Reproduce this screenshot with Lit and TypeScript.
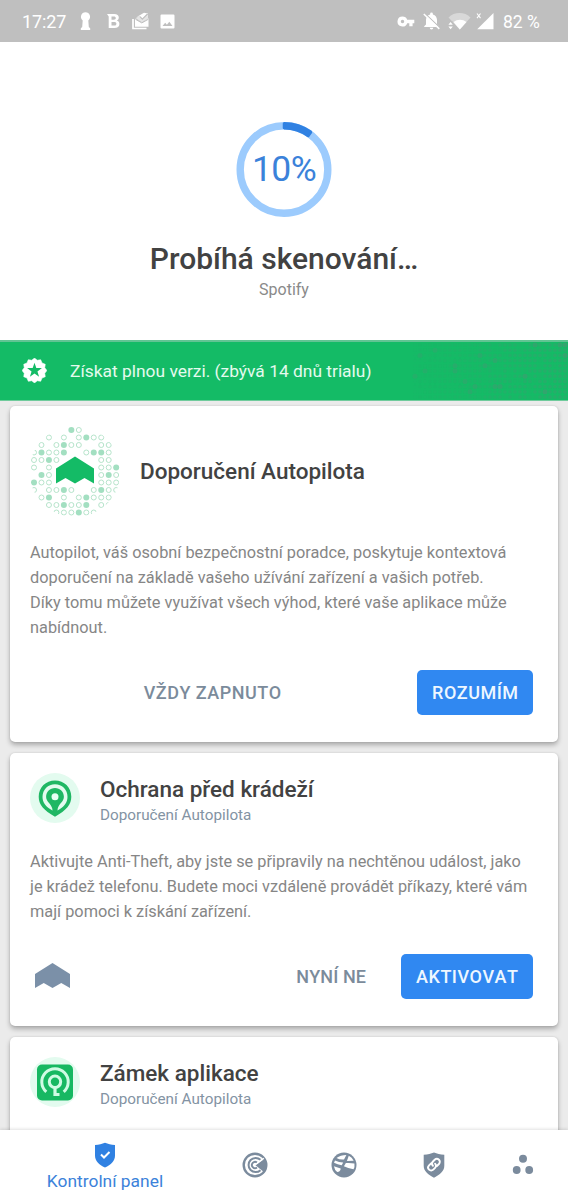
import { LitElement, html, svg, css } from "lit";
import { customElement } from "lit/decorators.js";

const MOUNTAIN = "M0 12 L19 0 L38 12 V27 L28.5 21.5 L19 27 L9.5 21.5 L0 27Z";

/* Halo of dots around the Autopilot mark: "o" ring, "F" filled, "." empty */
const HALO = [
  ".....Fo.....",
  "..o.o.oFoo..",
  ".o.oFoo..oo.",
  "oFooF..oFFo.",
  "ooFo.....oo.",
  "o.o......ooF",
  ".Fo......oFo",
  "Foo......ooo",
  "o.ooFo..oFoo",
  ".oF.o.oFooo.",
  "..ooFooF.oo.",
  "...oooFoo...",
];

const halo = HALO.flatMap((row, y) =>
  [...row].map((c, x) =>
    c === "."
      ? svg``
      : svg`<circle cx=${4 + x * 7.47} cy=${4 + y * 7.5} r=${c === "F" ? 3 : 2.5}
          fill=${c === "F" ? "#a3dfc1" : "none"} stroke=${c === "F" ? "none" : "#b5e3ca"} stroke-width="1"/>`
  )
);

/* Fading texture at the right end of the promo banner */
const texture = Array.from({ length: 11 * 31 }, (_, i) => {
  const x = i % 31;
  const y = Math.floor(i / 31);
  const h = Math.abs(Math.sin(x * 12.99 + y * 78.23) * 43758.5) % 1;
  const big = h > 0.93;
  const o = 0.06 + (x / 31) * 0.32 * (h > 0.25 ? 1 : 0.3) + (big ? 0.22 : 0);
  return svg`<circle cx=${3 + x * 5} cy=${3 + y * 5.2} r=${big ? 2.5 : 1.9} fill="#4a9474" opacity=${o.toFixed(2)}/>`;
});

const burst = Array.from({ length: 24 }, (_, i) => {
  const a = (i * Math.PI) / 12;
  const r = i % 2 ? 10.6 : 12.4;
  return `${(12.5 + r * Math.sin(a)).toFixed(2)},${(12.5 - r * Math.cos(a)).toFixed(2)}`;
}).join(" ");
const star = Array.from({ length: 10 }, (_, i) => {
  const a = (i * Math.PI) / 5;
  const r = i % 2 ? 3.1 : 7.8;
  return `${(12.5 + r * Math.sin(a)).toFixed(2)},${(12.5 - r * Math.cos(a)).toFixed(2)}`;
}).join(" ");

@customElement("status-bar")
export class StatusBar extends LitElement {
  static styles = css`
    :host { display: flex; align-items: center; height: 42px; background: #bfbfbf; color: #fff;
      font-size: 18px; box-sizing: border-box; padding: 0 28px 0 22px; }
    .group { display: flex; align-items: center; }
    .time { width: 57px; line-height: 20px; letter-spacing: -0.1px; padding-top: 1px; }
    .right { margin-left: auto; }
    svg { display: block; flex: none; }
    .i2 { margin-left: 16px; }
    .i3 { margin-left: 12px; }
    .i4 { margin-left: 11px; }
    .r2 { margin-left: 8px; }
    .r3 { margin-left: 8px; }
    .r4 { margin-left: 5px; }
    .pct { margin-left: 9px; line-height: 20px; width: 37px; padding-top: 1px; white-space: nowrap; font-size: 17.500px; }
  `;
  render() {
    return html`
      <div class="group">
        <span class="time">17:27</span>
        <svg width="12" height="20" viewBox="0 0 12 20"><path fill="#fff" d="M6.500 1.200a4.600 4.600 0 0 1 2.800 8.200L9.800 16l1.400 1.200V19H1.800v-1.800L3.200 16l.5-6.600a4.600 4.600 0 0 1 2.800-8.200z"/></svg>
        <svg class="i2" width="13" height="16" viewBox="0 0 13 16"><path fill="#fff" fill-rule="evenodd" d="M0 1h7.200c3 0 4.600 1.400 4.600 3.600 0 1.500-.8 2.500-2 3 1.700.5 2.600 1.600 2.600 3.300 0 2.500-1.800 4.100-5 4.100H1.700V3.500zM4.500 3.400v3.300h2.200c1.400 0 2.100-.6 2.100-1.700S8.100 3.400 6.700 3.400zm0 5.500v3.700h2.600c1.500 0 2.300-.7 2.300-1.900s-.8-1.800-2.300-1.800z"/></svg>
        <svg class="i3" width="17" height="18" viewBox="0 0 17 18"><path fill="none" stroke="#fff" stroke-width="1.700" d="M1 7v9.500h13.500"/><path fill="#fff" d="M3 6.800 7.200 3.800 10 7.600l6-6.200L12 .8 6 4.300 3 6.800v8h13.500V6.300l-6.300 4.500z"/><path d="M7 3.800 10 7l6-4.600v4.200l-6 3.700-6-3.700z" fill="#fff" opacity=".6"/><path d="m8 4.700 2.300 2.400 5-5" fill="none" stroke="#bfbfbf" stroke-width="1.200"/><path d="m3.500 7.300 6.300 3.600 6.500-3.600" fill="none" stroke="#bfbfbf"/></svg>
        <svg class="i4" width="15" height="15" viewBox="0 0 15 15"><path fill="#fff" fill-rule="evenodd" d="M1.600.5h11.800q1.100 0 1.100 1.100v11.800q0 1.100-1.100 1.100H1.600q-1.100 0-1.100-1.100V1.600Q.5.500 1.600.5zM2.500 12h10L9.300 7.700l-2.400 3.100L5.200 8.700z"/></svg>
      </div>
      <div class="group right">
        <svg width="18" height="11" viewBox="0 0 18 11"><path fill="#fff" fill-rule="evenodd" d="M5.500.5a5 5 0 0 1 4.700 3.300H17.300v3.400h-1.700v3h-3.300v-3h-2.100A5 5 0 1 1 5.500.5zm0 3.300a1.700 1.700 0 1 0 0 3.400 1.700 1.700 0 0 0 0-3.400z"/></svg>
        <svg class="r2" width="17" height="18" viewBox="0 0 17 18"><path fill="#fff" d="M8.500 17.500a1.800 1.800 0 0 0 1.800-1.700H6.700a1.800 1.800 0 0 0 1.800 1.700zM14 12.500V8c0-2.700-1.500-5-4.100-5.600v-.5a1.400 1.400 0 0 0-2.800 0v.5C4.500 3 3 5.300 3 8v4.500l-1.800 1.700V15h14.600v-.8z"/><path d="M2.400 1.900 17 15.900" stroke="#bfbfbf" stroke-width="1.300"/><path d="M.8 2 16.300 16.900" stroke="#fff" stroke-width="1.500"/></svg>
        <svg class="r3" width="23" height="18" viewBox="0 0 23 18"><path fill="#fff" opacity=".4" d="M.5 5.500a16 16 0 0 1 22 0L11.800 17.500z"/><path fill="#fff" d="M5.500 10a10.500 10.500 0 0 1 13 0l-6.700 7.500z"/><path fill="#bfbfbf" d="M0 9.500h4.800l2 8H0z"/><path fill="#fff" d="M.4 12.700 2.600 10l2.200 2.700zm0 1.800h4.400L2.600 17.200z"/></svg>
        <svg class="r4" width="18" height="18" viewBox="0 0 18 18"><path fill="#fff" d="M17.500 1v16.300H1.200z"/><path d="M1 1.500 4.500 6.200M4.500 1.500 1 6.200" stroke="#fff" stroke-width="1.100"/></svg>
        <span class="pct">82 %</span>
      </div>`;
  }
}

@customElement("scan-progress")
export class ScanProgress extends LitElement {
  static styles = css`
    :host { display: flex; flex-direction: column; align-items: center; height: 298px; background: #fff;
      box-sizing: border-box; padding-top: 79px; }
    .ring { display: grid; place-items: center; }
    .ring > * { grid-area: 1 / 1; }
    .pct { color: #3b82da; font-size: 35.500px; line-height: 40px; letter-spacing: -0.6px; margin-top: -2px; }
    .title { margin-top: 22px; font-size: 30px; line-height: 38px; font-weight: 500; color: #424242; white-space: nowrap; }
    .app { margin-top: 2px; font-size: 16px; line-height: 20px; color: #8a8a8a; }
    svg { display: block; }
  `;
  render() {
    return html`
      <div class="ring">
        <svg width="96" height="97" viewBox="0.5 0 96 97" fill="none">
          <circle cx="48.500" cy="48.500" r="43.800" stroke="#9ccbfd" stroke-width="7.400"/>
          <path d="M48.500 4.700A43.800 43.800 0 0 1 74.240 13.060" stroke="#3081e2" stroke-width="7.600" />
          <path d="M48.500 2.500v4.500M75.500 11.200l-2.700 3.700" stroke="#3081e2" stroke-width="2.500" stroke-linecap="round"/>
        </svg>
        <span class="pct">10%</span>
      </div>
      <div class="title">Probíhá skenování…</div>
      <div class="app">Spotify</div>`;
  }
}

@customElement("promo-banner")
export class PromoBanner extends LitElement {
  static styles = css`
    :host { display: grid; grid-template-columns: 1fr; height: 61px; box-sizing: border-box; align-items: center;
      background: #14bb66; border-top: 2px solid #62c493; border-bottom: 1px solid #70cb9c; overflow: hidden; }
    .row, .texture { grid-area: 1 / 1; }
    .row { display: flex; align-items: center; gap: 23px; padding-left: 22px; color: #e4faee; font-size: 17.400px; line-height: 24px; white-space: nowrap; }
    .texture { justify-self: end; display: block; }
    .badge { margin-top: -2px; }
    svg { flex: none; }
  `;
  render() {
    return html`
      <svg class="texture" width="156" height="58" viewBox="0 0 156 58">${texture}</svg>
      <div class="row">
        <svg class="badge" width="25" height="25" viewBox="0 0 25 25"><polygon points=${burst} fill="#fff" stroke="#fff" stroke-width=".6" stroke-linejoin="round"/><polygon points=${star} fill="#14bb66"/></svg>
        <span class="text">Získat plnou verzi. (zbývá 14 dnů trialu)</span>
      </div>`;
  }
}

const pinIcon = svg`
  <circle cx="25" cy="25" r="25" fill="#e3fbef"/>
  <path fill="#20b764" d="M25 7.500c9.200 0 16.300 6.900 16.300 16.200 0 7.600-4.800 13.600-16.300 20-11.500-6.400-16.300-12.400-16.300-20C8.700 14.400 15.800 7.500 25 7.500z"/>
  <path fill="#e3fbef" d="M25 11.300c7 0 12.500 5.400 12.500 12.500 0 5.200-2.800 9.300-7.900 12.500-1.400.9-1.400.9-4.600 2.600-3.200-1.700-3.200-1.700-4.600-2.600-5.100-3.200-7.900-7.300-7.900-12.500 0-7.100 5.500-12.500 12.500-12.500z"/>
  <path fill="#20b764" d="M25 15c5 0 8.900 3.800 8.900 8.800 0 5-5.200 7-6.300 12.200V40h-5.200v-4c-1.100-5.200-6.300-7.200-6.300-12.200 0-5 3.900-8.800 8.900-8.800z"/>
  <circle cx="25" cy="23.800" r="3.500" fill="#e9fff5"/>`;

const lockIcon = svg`
  <circle cx="25" cy="25" r="25" fill="#e3fbef"/>
  <rect x="7" y="7.500" width="36" height="36" rx="5" fill="#17b862"/>
  <path d="M16.300 34.800A13.200 13.200 0 1 1 33.700 34.800" fill="none" stroke="#cffbe4" stroke-width="3"/>
  <circle cx="25" cy="24.800" r="5.700" fill="none" stroke="#cffbe4" stroke-width="3"/>
  <path d="M25 30v9M24 37.500h5.500" fill="none" stroke="#cffbe4" stroke-width="3.200"/>`;

@customElement("tip-card")
export class TipCard extends LitElement {
  static properties = { heading: {}, kind: {}, body: {}, later: {}, action: {} };
  declare heading: string;
  declare kind: string;
  declare body: string;
  declare later: string;
  declare action: string;
  static styles = css`
    :host { display: flex; flex-direction: column; box-sizing: border-box; background: #fff; border-radius: 5px;
      box-shadow: 0 3px 5px rgba(0, 0, 0, .28), 0 0 2px rgba(0, 0, 0, .12); padding: 20px 25px 0 20px; }
    .head { display: flex; align-items: flex-start; gap: 20px; height: 50px; }
    svg { display: block; flex: none; }
    .names { display: flex; flex-direction: column; padding-top: 2px; }
    .heading { font-size: 22.500px; line-height: 28px; font-weight: 500; color: #424242; white-space: nowrap; }
    .by { font-size: 15.250px; line-height: 20px; color: #8393a3; margin-top: 2px; white-space: nowrap; }
    .body { margin-top: 26px; font-size: 16.320px; line-height: 25px; color: #868686; white-space: pre; }
    .actions { display: flex; align-items: center; margin-top: 29px; height: 46px; }
    .later { margin-left: auto; margin-right: 35px; }
    .later, .action { font-size: 18px; line-height: 22px; font-weight: 500; white-space: nowrap; font-kerning: none; letter-spacing: 0.5px; }
    .later { color: #7b8b9b; padding-top: 2px; letter-spacing: 0.1px; }
    .action { display: grid; place-items: center; box-sizing: border-box; height: 45px; padding: 2px 14.500px 0 15px; border-radius: 5px; background: #3088f1; color: #eef7ff; }
    .mark { margin: 0 0 2px 5px; }
    .head.intro { align-items: center; height: 90px; }
    .intro .names { padding: 0 0 0; }
    .intro + .body { margin-top: 24px; }
    .intro .later { margin-right: 135.500px; letter-spacing: 0.5px; }
  `;
  render() {
    const intro = this.kind === "intro";
    return html`
      <div class="head ${intro ? "intro" : ""}">
        ${intro
          ? html`<svg width="90" height="90" viewBox="0 0 90 90">
              <defs><clipPath id="c"><circle cx="45" cy="45.500" r="45.500"/></clipPath></defs>
              <g clip-path="url(#c)">${halo}</g>
              <path d=${MOUNTAIN} transform="translate(26 30.500)" fill="#14bb66"/></svg>`
          : html`<svg width="50" height="50" viewBox="0 0 50 50">${this.kind === "pin" ? pinIcon : lockIcon}</svg>`}
        <div class="names">
          <div class="heading">${this.heading}</div>
          ${intro ? "" : html`<div class="by">Doporučení Autopilota</div>`}
        </div>
      </div>
      ${this.body
        ? html`<div class="body">${this.body}</div>
            <div class="actions ${intro ? "intro" : ""}">
              ${intro ? "" : html`<svg class="mark" width="35" height="25" viewBox="0 0 38 27" preserveAspectRatio="none"><path d=${MOUNTAIN} fill="#7b90a8"/></svg>`}
              <span class="later">${this.later}</span>
              <span class="action">${this.action}</span>
            </div>`
        : ""}`;
  }
}

@customElement("bottom-nav")
export class BottomNav extends LitElement {
  static styles = css`
    :host { display: grid; grid-template-columns: 210px repeat(4, 89.500px); height: 70px; background: #fff;
      box-shadow: 0 -1px 3px rgba(0, 0, 0, .12); z-index: 1; }
    .item { display: grid; place-items: center; }
    .active { display: flex; flex-direction: column; align-items: center; padding-top: 12px; color: #3b82da;
      font-size: 17.400px; line-height: 24px; }
    .label { margin-top: 1px; white-space: nowrap; }
    svg { display: block; }
  `;
  render() {
    return html`
      <div class="active">
        <svg width="22" height="26" viewBox="0 0 22 26"><path fill="#3081e2" d="M11 .8c3 1.300 6 1.900 10 2.200v10.500c0 5.300-4 9.300-10 12-6-2.700-10-6.700-10-12V3C5 2.700 8 2.100 11 .8z"/><path d="m7 12.500 3 3 5.500-5.500" fill="none" stroke="#fff" stroke-width="2"/></svg>
        <span class="label">Kontrolní panel</span>
      </div>
      <div class="item"><svg width="26" height="26" viewBox="0 0 26 26" fill="none">
        <g stroke="#7b8b9d"><circle cx="13" cy="13" r="11.300" stroke-width="2.400"/>
        <path d="M18.500 7.800A7.100 7.100 0 1 0 18.500 18.200" stroke-width="2"/>
        <path d="M15 10.400A3.200 3.200 0 1 0 15 15.600" stroke-width="1.900"/></g>
        <path fill="#7b8b9d" d="M13.500 13.200 23 6.500Q27 13 22.500 20.500z"/>
        <path d="M14 12.300 21.800 6.300" stroke="#fff" stroke-width="1.300"/></svg></div>
      <div class="item"><svg width="26" height="26" viewBox="0 0 26 26">
        <circle cx="13" cy="13" r="12.500" fill="#7b8b9d"/>
        <g fill="#fff"><path d="M5.500 6.100Q9.500 3 15.400 2.900L13 7.500Q9 8 5.500 6.100z"/><path d="M17.800 3.700Q21 5 22.700 8.700L15.900 9z"/>
        <path d="M4 8.500Q8.500 10.500 12.200 10.400L10.700 13.300Q6.500 12.500 3 10.800z"/><path d="M14.900 11Q20 10.800 23.400 11.400 24 15 22.500 17.300 17 16.300 12.900 14.200z"/>
        <path d="M2.900 14.200Q7 15.500 9.700 16.400 9.500 19.500 6.200 20 3.600 18 2.900 14.200z"/></g></svg></div>
      <div class="item"><svg width="22" height="26" viewBox="0 0 22 26"><path fill="#7b8b9d" d="M11 .6c3 1.300 6 1.900 10.300 2.200v11c0 5.200-4.300 9-10.300 11.900C5 22.800.7 19 .7 13.800v-11C5 2.500 8 1.900 11 .6z"/>
        <g transform="rotate(-45 11 12.700)" fill="none" stroke="#fff" stroke-width="1.900" stroke-linecap="round"><path d="M9.900 9.700H7a3 3 0 0 0 0 6h2.500a3 3 0 0 0 3-3M12.100 15.700H15a3 3 0 0 0 0-6h-2.500a3 3 0 0 0-3 3"/></g></svg></div>
      <div class="item"><svg width="22" height="22" viewBox="0 0 22 22" fill="#7b8b9d"><circle cx="11" cy="4.700" r="4"/><circle cx="4.700" cy="16" r="3.900"/><circle cx="17.200" cy="16" r="3.900"/></svg></div>`;
  }
}

@customElement("app-root")
export class AppRoot extends LitElement {
  static styles = css`
    :host { display: flex; flex-direction: column; height: 1200px; width: 568px; overflow: hidden; background: #ebebeb;
      font-family: Roboto, "Noto Sans", sans-serif; }
    status-bar, scan-progress, promo-banner, bottom-nav { flex: none; }
    .feed { flex: 1; min-height: 0; overflow: hidden; display: grid; grid-template-rows: 336px 273px 120px; gap: 11px; padding: 5px 10px 0; }
  `;
  render() {
    return html`
      <status-bar></status-bar>
      <scan-progress></scan-progress>
      <promo-banner></promo-banner>
      <div class="feed">
        <tip-card kind="intro" heading="Doporučení Autopilota"
          .body=${"Autopilot, váš osobní bezpečnostní poradce, poskytuje kontextová\ndoporučení na základě vašeho užívání zařízení a vašich potřeb.\nDíky tomu můžete využívat všech výhod, které vaše aplikace může\nnabídnout."}
          later="VŽDY ZAPNUTO" action="ROZUMÍM"></tip-card>
        <tip-card kind="pin" heading="Ochrana před krádeží"
          .body=${"Aktivujte Anti-Theft, aby jste se připravily na nechtěnou událost, jako\nje krádež telefonu. Budete moci vzdáleně provádět příkazy, které vám\nmají pomoci k získání zařízení."}
          later="NYNÍ NE" action="AKTIVOVAT"></tip-card>
        <tip-card kind="lock" heading="Zámek aplikace"></tip-card>
      </div>
      <bottom-nav></bottom-nav>`;
  }
}
